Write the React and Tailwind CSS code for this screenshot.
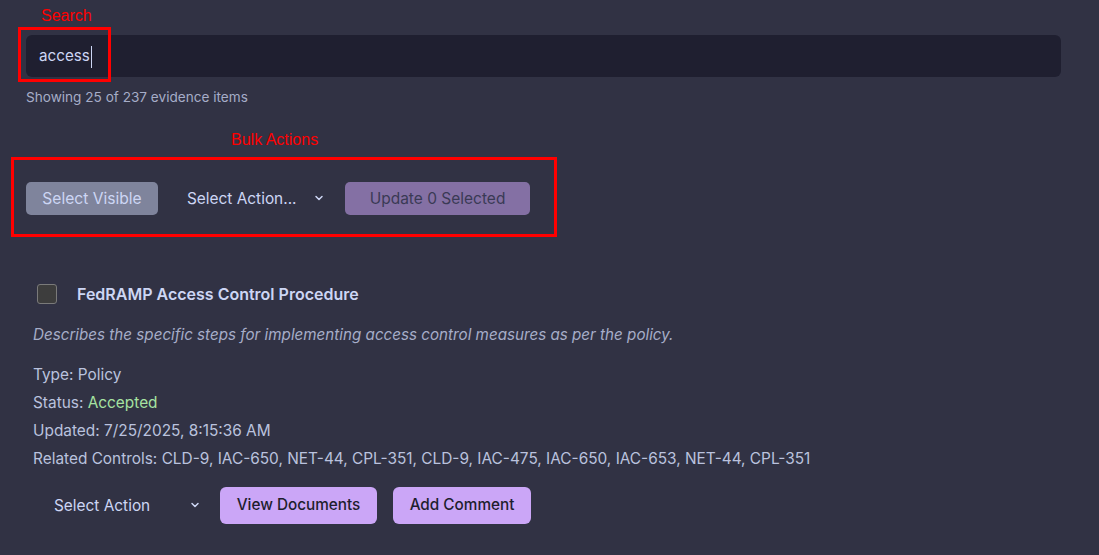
import React from 'react'

function Chevron({ className = '' }) {
  return (
    <svg viewBox="0 0 16 16" className={`h-3 w-3 ${className}`} fill="none" stroke="currentColor" strokeWidth="2" strokeLinecap="round" strokeLinejoin="round">
      <path d="M4 6l4 4 4-4" />
    </svg>
  )
}

export default function App() {
  const controls = 'CLD-9, IAC-650, NET-44, CPL-351, CLD-9, IAC-475, IAC-650, IAC-653, NET-44, CPL-351'

  return (
    <div className="min-h-[555px] w-full bg-[#313244] text-[#cdd6f4] font-['Inter','Liberation_Sans',sans-serif]">
      <div className="px-[26px] pt-[35px] pr-[38px]">
        {/* search */}
        <div className="relative">
          <span className="absolute left-[15px] top-[-29px] font-['Liberation_Sans',sans-serif] text-[16px] leading-5 text-[#ff0000]">Search</span>
          <div className="absolute left-[-8px] top-[-8px] h-[55px] w-[93px] border-[3px] border-[#ff0000]" />
          <div className="flex h-[42px] items-center rounded-md bg-[#1f1f30] px-[13px] pt-px text-[15.2px]">
            access<span className="ml-px h-[22px] w-px bg-[#cdd6f4]" />
          </div>
        </div>
        <p className="mt-[10px] text-[13.6px] leading-5 text-[#a6adc8]">Showing 25 of 237 evidence items</p>

        {/* bulk actions */}
        <div className="relative mt-[75px] flex items-center">
          <span className="absolute left-[205px] top-[-52px] font-['Liberation_Sans',sans-serif] text-[16px] leading-5 text-[#ff0000]">Bulk Actions</span>
          <div className="absolute left-[-15px] top-[-25px] h-[80px] w-[546px] border-[3px] border-[#ff0000]" />
          <button className="h-[33px] w-[132px] rounded-[5px] bg-[#7f849c] text-[15.6px] text-[#cdd6f4]">Select Visible</button>
          <div className="ml-[29px] flex w-[140px] items-center text-[15.4px] text-[#cdd6f4]">
            <span>Select Action...</span>
            <Chevron className="ml-auto mr-[2px]" />
          </div>
          <button className="ml-[18px] h-[33px] w-[185px] rounded-[5px] bg-[#8470a4] text-[15.5px] text-[#3a3a55]">Update 0 Selected</button>
        </div>

        {/* evidence card */}
        <div className="mt-[67px] pl-[7px]">
          <div className="flex items-center">
            <span className="ml-[4px] h-[20px] w-[20px] rounded-[3px] border border-[#7a7a7a] bg-[#3d3d3d]" />
            <h3 className="ml-[20px] text-[16px] font-semibold text-[#cdd6f4]">FedRAMP Access Control Procedure</h3>
          </div>
          <p className="mt-[18px] text-[15.2px] italic text-[#a6adc8]">Describes the specific steps for implementing access control measures as per the policy.</p>
          <div className="mt-[14px] flex flex-col text-[15.4px] leading-[28px] text-[#bac2de]">
            <span>Type: Policy</span>
            <span>Status: <span className="text-[#a6e3a1]">Accepted</span></span>
            <span>Updated: 7/25/2025, 8:15:36 AM</span>
            <span>Related Controls: {controls}</span>
          </div>
          <div className="mt-[14px] flex items-center">
            <div className="ml-[21px] flex w-[147px] items-center text-[15.4px] text-[#cdd6f4]">
              <span>Select Action</span>
              <Chevron className="ml-auto" />
            </div>
            <button className="ml-[19px] h-[37px] w-[157px] rounded-md bg-[#cba6f7] text-[15.3px] font-medium text-[#1e1e2e]">View Documents</button>
            <button className="ml-[16px] h-[37px] w-[138px] rounded-md bg-[#cba6f7] text-[15.3px] font-medium text-[#1e1e2e]">Add Comment</button>
          </div>
        </div>
      </div>
    </div>
  )
}
